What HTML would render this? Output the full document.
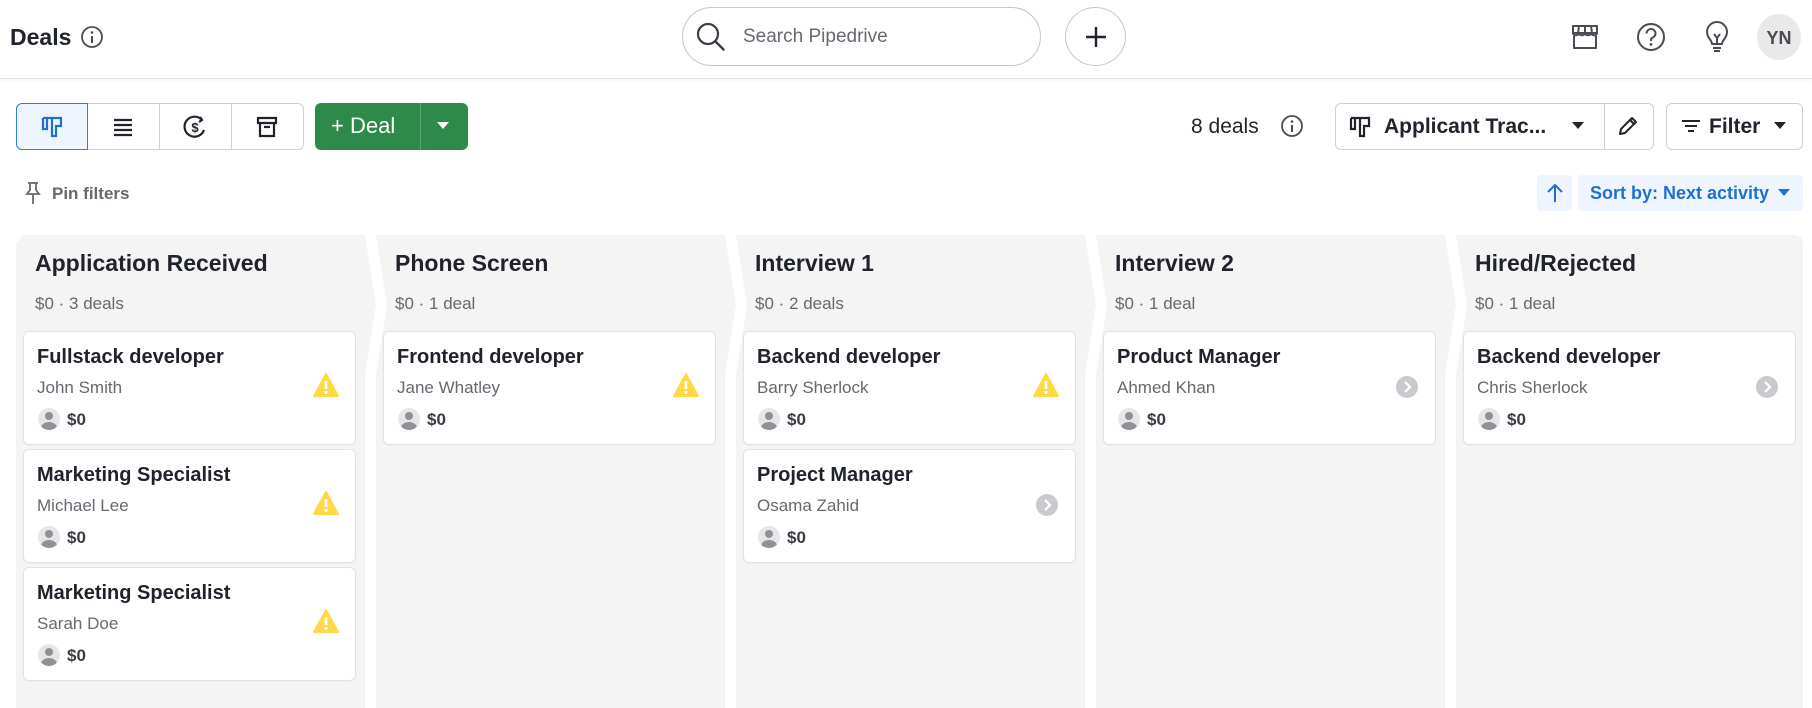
<!DOCTYPE html>
<html><head><meta charset="utf-8">
<style>
*{box-sizing:border-box;margin:0;padding:0}
body{width:1812px;height:708px;overflow:hidden;background:#fff;font-family:"Liberation Sans",Arial,sans-serif;color:#21232c;position:relative}
.a{position:absolute}
.hdr{left:0;top:0;width:1812px;height:79px;border-bottom:1px solid #e3e3e5;box-shadow:0 1px 3px rgba(0,0,0,.06)}
.btn{position:absolute;border:1px solid #cfd0d3;border-radius:6px;background:#fff}
.col{position:absolute;top:235px;height:473px;background:#f4f4f5}
.ct{position:absolute;left:19px;top:15px;font-size:23px;font-weight:bold;white-space:nowrap}
.cs{position:absolute;left:19px;top:59px;font-size:17px;color:#65686f;white-space:nowrap}
.card{position:absolute;left:8px;width:331px;height:112px;background:#fff;border-radius:5px;box-shadow:0 0 0 1px #e2e2e4,0 1px 2px rgba(0,0,0,.08)}
.card .t{position:absolute;left:13px;top:14px;font-size:20px;font-weight:bold;white-space:nowrap}
.card .n{position:absolute;left:13px;top:46px;font-size:17px;color:#65686f;white-space:nowrap}
.card .av{position:absolute;left:14px;top:76px;width:22px;height:22px;border-radius:50%;background:#e6e6e8;overflow:hidden}
.card .av:before{content:"";position:absolute;left:7px;top:4px;width:8px;height:8px;border-radius:50%;background:#8f9196}
.card .av:after{content:"";position:absolute;left:3px;top:14px;width:16px;height:12px;border-radius:50%;background:#8f9196}
.card .v{position:absolute;left:43px;top:78px;font-size:17px;font-weight:bold;color:#3a3c44}
.card .w{position:absolute;left:289px;top:41px}
.card .g{position:absolute;left:292px;top:44px;width:22px;height:22px;border-radius:50%;background:#c9cacd}
</style></head><body>
<div class="a hdr"></div>
<div class="a" style="left:10px;top:24px;font-size:23px;font-weight:bold">Deals</div>
<svg class="a" style="left:80px;top:25px" width="24" height="24" viewBox="0 0 24 24"><circle cx="12" cy="12" r="10" fill="none" stroke="#4a4c53" stroke-width="1.8"/><circle cx="12" cy="7.5" r="1.3" fill="#4a4c53"/><path d="M12 11v7" stroke="#4a4c53" stroke-width="2"/></svg>
<div class="a" style="left:682px;top:7px;width:359px;height:59px;border:1px solid #c6c7ca;border-radius:30px"></div>
<svg class="a" style="left:695px;top:21px" width="32" height="32" viewBox="0 0 32 32"><circle cx="13" cy="13" r="10" fill="none" stroke="#3a3c44" stroke-width="2.2"/><path d="M20.5 20.5l8 8" stroke="#3a3c44" stroke-width="2.4" stroke-linecap="round"/></svg>
<div class="a" style="left:743px;top:26px;font-size:19px;color:#65686f">Search Pipedrive</div>
<div class="a" style="left:1065px;top:7px;width:61px;height:59px;border:1px solid #c6c7ca;border-radius:50%"></div>
<svg class="a" style="left:1083px;top:24px" width="26" height="26" viewBox="0 0 26 26"><path d="M13 3v20M3 13h20" stroke="#21232c" stroke-width="2.4"/></svg>
<svg class="a" style="left:1569px;top:22px" width="32" height="30" viewBox="0 0 32 30"><path d="M4 11V4h24v7M4 11c0 3 5 3 6 0 1 3 5 3 6 0 1 3 5 3 6 0 1 3 6 3 6 0M5 14v12h22V14M4 11h24M10 4l-1 7M16 4v7M22 4l1 7" fill="none" stroke="#4a4c53" stroke-width="2" stroke-linejoin="round"/></svg>
<svg class="a" style="left:1635px;top:21px" width="32" height="32" viewBox="0 0 32 32"><circle cx="16" cy="16" r="13" fill="none" stroke="#4a4c53" stroke-width="2"/><path d="M11.5 12.5a4.5 4.5 0 1 1 6 4.2c-1 .5-1.5 1.3-1.5 2.3v1" fill="none" stroke="#4a4c53" stroke-width="2"/><circle cx="16" cy="23.5" r="1.4" fill="#4a4c53"/></svg>
<svg class="a" style="left:1703px;top:20px" width="28" height="34" viewBox="0 0 28 34"><path d="M9 24c0-4-5-6-5-12a10 10 0 0 1 20 0c0 6-5 8-5 12zM10 28h8M11 31h6M11 14l3 4 3-4M14 18v6" fill="none" stroke="#4a4c53" stroke-width="2" stroke-linejoin="round"/></svg>
<div class="a" style="left:1757px;top:14px;width:44px;height:46px;border-radius:50%;background:#e9e9ea;font-size:18px;font-weight:bold;color:#4a4c53;text-align:center;line-height:48px">YN</div>

<div class="btn" style="left:16px;top:103px;width:288px;height:47px"></div>
<div class="a" style="left:16px;top:103px;width:72px;height:47px;border:1px solid #2f7fd8;border-radius:6px 0 0 6px;background:#eef5ff"></div>
<div class="a" style="left:159px;top:104px;width:1px;height:45px;background:#cfd0d3"></div>
<div class="a" style="left:231px;top:104px;width:1px;height:45px;background:#cfd0d3"></div>
<svg class="a" style="left:41px;top:116px" width="22" height="22" viewBox="0 0 22 22"><path d="M2 2h18v8h-5v10h-4V10H11M2 2v11h4V2M6 2v9M11 2v16" fill="none" stroke="#1f6fd1" stroke-width="2.2"/></svg>
<svg class="a" style="left:112px;top:117px" width="22" height="20" viewBox="0 0 22 20"><path d="M2 3h18M2 8h18M2 13h18M2 18h18" stroke="#21232c" stroke-width="2.2"/></svg>
<svg class="a" style="left:183px;top:115px" width="24" height="24" viewBox="0 0 24 24"><path d="M19 5A10 10 0 1 0 21 15M17 2l2 3-3 2" fill="none" stroke="#21232c" stroke-width="2.2"/><text x="12" y="17" font-size="13" font-weight="bold" text-anchor="middle" fill="#21232c" font-family="Liberation Sans">$</text></svg>
<svg class="a" style="left:256px;top:116px" width="22" height="22" viewBox="0 0 22 22"><path d="M2 2h18v5H2zM4 7v13h14V7M8 11h6" fill="none" stroke="#21232c" stroke-width="2.2"/></svg>
<div class="a" style="left:315px;top:103px;width:153px;height:47px;background:#2e8a4a;border-radius:6px"></div>
<div class="a" style="left:420px;top:103px;width:1px;height:47px;background:#5aa673"></div>
<div class="a" style="left:331px;top:113px;font-size:22px;color:#fff">+ Deal</div>
<svg class="a" style="left:436px;top:121px" width="14" height="10" viewBox="0 0 14 10"><path d="M1 1h12L7 8z" fill="#fff"/></svg>

<div class="a" style="left:1191px;top:115px;font-size:21px">8 deals</div>
<svg class="a" style="left:1280px;top:114px" width="24" height="24" viewBox="0 0 24 24"><circle cx="12" cy="12" r="10" fill="none" stroke="#4a4c53" stroke-width="1.8"/><circle cx="12" cy="7.5" r="1.3" fill="#4a4c53"/><path d="M12 11v7" stroke="#4a4c53" stroke-width="2"/></svg>
<div class="btn" style="left:1335px;top:103px;width:319px;height:47px"></div>
<div class="a" style="left:1604px;top:104px;width:1px;height:45px;background:#cfd0d3"></div>
<svg class="a" style="left:1349px;top:116px" width="22" height="22" viewBox="0 0 22 22"><path d="M2 2h18v8h-5v10h-4V10H11M2 2v11h4V2M6 2v9M11 2v16" fill="none" stroke="#21232c" stroke-width="2.2"/></svg>
<div class="a" style="left:1384px;top:115px;font-size:21px;font-weight:bold">Applicant Trac...</div>
<svg class="a" style="left:1571px;top:121px" width="14" height="10" viewBox="0 0 14 10"><path d="M1 1h12L7 8z" fill="#21232c"/></svg>
<svg class="a" style="left:1617px;top:115px" width="22" height="22" viewBox="0 0 22 22"><path d="M3 19l1-5L15 3l4 4L8 18zM13 5l4 4" fill="none" stroke="#21232c" stroke-width="2" stroke-linejoin="round"/></svg>
<div class="btn" style="left:1666px;top:103px;width:137px;height:47px"></div>
<svg class="a" style="left:1681px;top:118px" width="20" height="16" viewBox="0 0 20 16"><path d="M1 3h18M4 8h12M7 13h6" stroke="#21232c" stroke-width="2"/></svg>
<div class="a" style="left:1709px;top:115px;font-size:21px;font-weight:bold">Filter</div>
<svg class="a" style="left:1773px;top:121px" width="14" height="10" viewBox="0 0 14 10"><path d="M1 1h12L7 8z" fill="#21232c"/></svg>

<svg class="a" style="left:25px;top:181px" width="16" height="24" viewBox="0 0 16 24"><path d="M3 2h10M5 2v7l-3 4h12l-3-4V2M8 13v10" fill="none" stroke="#65686f" stroke-width="1.8"/></svg>
<div class="a" style="left:52px;top:184px;font-size:17px;font-weight:bold;color:#65686f">Pin filters</div>
<div class="a" style="left:1537px;top:175px;width:35px;height:36px;background:#eef5ff;border-radius:4px"></div>
<svg class="a" style="left:1544px;top:182px" width="22" height="22" viewBox="0 0 22 22"><path d="M11 20V3M4 10l7-7 7 7" fill="none" stroke="#1f6fd1" stroke-width="2"/></svg>
<div class="a" style="left:1578px;top:175px;width:225px;height:36px;background:#eef5ff;border-radius:4px"></div>
<div class="a" style="left:1590px;top:183px;font-size:18px;font-weight:bold;color:#1f6fd1">Sort by: Next activity</div>
<svg class="a" style="left:1777px;top:188px" width="14" height="10" viewBox="0 0 14 10"><path d="M1 1h12L7 8z" fill="#1f6fd1"/></svg>

<div class="col" style="left:16px;width:360px;clip-path:polygon(0 8px,8px 0,349px 0,360px 70px,349px 140px,349px 100%,0 100%);border-radius:8px 0 0 0">
<div class="ct">Application Received</div><div class="cs">$0 · 3 deals</div>
<div class="card" style="top:97px"><div class="t">Fullstack developer</div><div class="n">John Smith</div><div class="av"></div><div class="v">$0</div><svg class="w" width="26" height="24" viewBox="0 0 26 24"><path d="M13 1L25 23H1z" fill="#ffd94a" stroke="#ffd94a" stroke-linejoin="round" stroke-width="2"/><path d="M13 8v8" stroke="#fff" stroke-width="2.6"/><circle cx="13" cy="19.5" r="1.5" fill="#fff"/></svg></div>
<div class="card" style="top:215px"><div class="t">Marketing Specialist</div><div class="n">Michael Lee</div><div class="av"></div><div class="v">$0</div><svg class="w" width="26" height="24" viewBox="0 0 26 24"><path d="M13 1L25 23H1z" fill="#ffd94a" stroke="#ffd94a" stroke-linejoin="round" stroke-width="2"/><path d="M13 8v8" stroke="#fff" stroke-width="2.6"/><circle cx="13" cy="19.5" r="1.5" fill="#fff"/></svg></div>
<div class="card" style="top:333px"><div class="t">Marketing Specialist</div><div class="n">Sarah Doe</div><div class="av"></div><div class="v">$0</div><svg class="w" width="26" height="24" viewBox="0 0 26 24"><path d="M13 1L25 23H1z" fill="#ffd94a" stroke="#ffd94a" stroke-linejoin="round" stroke-width="2"/><path d="M13 8v8" stroke="#fff" stroke-width="2.6"/><circle cx="13" cy="19.5" r="1.5" fill="#fff"/></svg></div>
</div>

<div class="col" style="left:376px;width:361px;clip-path:polygon(0 0,349px 0,360px 70px,349px 140px,349px 100%,0 100%,0 140px,11px 70px)">
<div class="ct">Phone Screen</div><div class="cs">$0 · 1 deal</div>
<div class="card" style="top:97px"><div class="t">Frontend developer</div><div class="n">Jane Whatley</div><div class="av"></div><div class="v">$0</div><svg class="w" width="26" height="24" viewBox="0 0 26 24"><path d="M13 1L25 23H1z" fill="#ffd94a" stroke="#ffd94a" stroke-linejoin="round" stroke-width="2"/><path d="M13 8v8" stroke="#fff" stroke-width="2.6"/><circle cx="13" cy="19.5" r="1.5" fill="#fff"/></svg></div>
</div>

<div class="col" style="left:736px;width:361px;clip-path:polygon(0 0,349px 0,360px 70px,349px 140px,349px 100%,0 100%,0 140px,11px 70px)">
<div class="ct">Interview 1</div><div class="cs">$0 · 2 deals</div>
<div class="card" style="top:97px"><div class="t">Backend developer</div><div class="n">Barry Sherlock</div><div class="av"></div><div class="v">$0</div><svg class="w" width="26" height="24" viewBox="0 0 26 24"><path d="M13 1L25 23H1z" fill="#ffd94a" stroke="#ffd94a" stroke-linejoin="round" stroke-width="2"/><path d="M13 8v8" stroke="#fff" stroke-width="2.6"/><circle cx="13" cy="19.5" r="1.5" fill="#fff"/></svg></div>
<div class="card" style="top:215px"><div class="t">Project Manager</div><div class="n">Osama Zahid</div><div class="av"></div><div class="v">$0</div><div class="g"><svg width="22" height="22" viewBox="0 0 22 22"><path d="M9 6l5 5-5 5" fill="none" stroke="#fff" stroke-width="2.2"/></svg></div></div>
</div>

<div class="col" style="left:1096px;width:361px;clip-path:polygon(0 0,349px 0,360px 70px,349px 140px,349px 100%,0 100%,0 140px,11px 70px)">
<div class="ct">Interview 2</div><div class="cs">$0 · 1 deal</div>
<div class="card" style="top:97px"><div class="t">Product Manager</div><div class="n">Ahmed Khan</div><div class="av"></div><div class="v">$0</div><div class="g"><svg width="22" height="22" viewBox="0 0 22 22"><path d="M9 6l5 5-5 5" fill="none" stroke="#fff" stroke-width="2.2"/></svg></div></div>
</div>

<div class="col" style="left:1456px;width:347px;border-radius:0 8px 0 0;clip-path:polygon(0 0,347px 0,347px 100%,0 100%,0 140px,11px 70px)">
<div class="ct">Hired/Rejected</div><div class="cs">$0 · 1 deal</div>
<div class="card" style="top:97px"><div class="t">Backend developer</div><div class="n">Chris Sherlock</div><div class="av"></div><div class="v">$0</div><div class="g"><svg width="22" height="22" viewBox="0 0 22 22"><path d="M9 6l5 5-5 5" fill="none" stroke="#fff" stroke-width="2.2"/></svg></div></div>
</div>
</body></html>
